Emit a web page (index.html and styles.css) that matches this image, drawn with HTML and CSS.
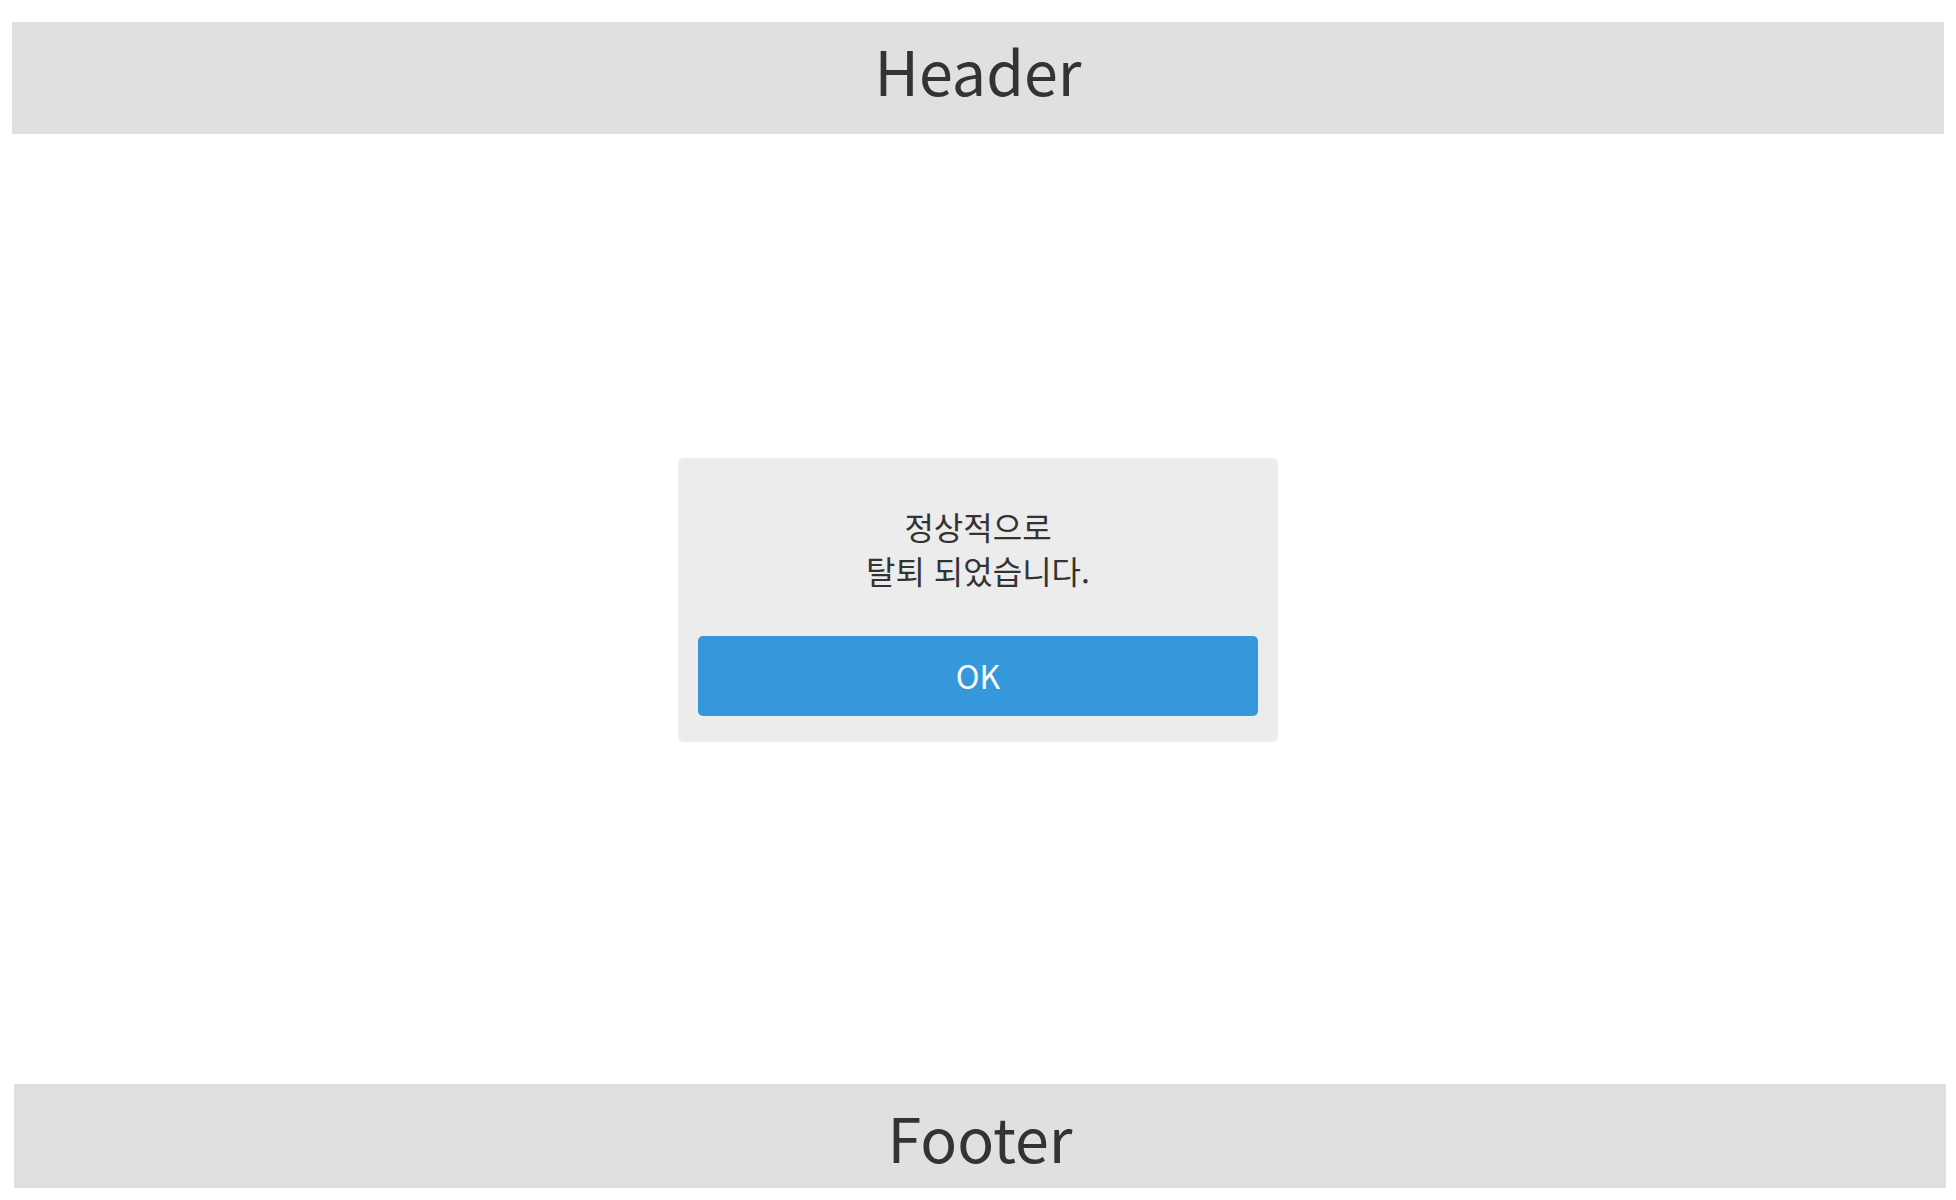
FILE: index.html
```html
<!DOCTYPE html>
<html lang="ko">
<head>
<meta charset="utf-8">
<title>탈퇴 완료</title>
<link rel="stylesheet" href="styles.css">
</head>
<body>
<div class="page">
  <header class="header">Header</header>
  <main class="main">
    <div class="dialog">
      <p class="message">정상적으로<br>탈퇴 되었습니다.</p>
      <button class="ok-btn" type="button">OK</button>
    </div>
  </main>
  <footer class="footer">Footer</footer>
</div>
</body>
</html>
```

FILE: styles.css
```css
html, body {
  margin: 0;
  padding: 0;
  background: #ffffff;
}
body {
  font-family: "Noto Sans CJK KR", "Noto Sans", sans-serif;
  color: #333333;
}
.page {
  height: 1200px;
  box-sizing: border-box;
  padding: 22px 0 12px;
  display: flex;
  flex-direction: column;
}
.header {
  margin: 0 12px;
  height: 112px;
  box-sizing: border-box;
  padding-bottom: 18px;
  background: #e0e0e0;
  display: flex;
  align-items: center;
  justify-content: center;
  font-size: 61px;
  color: #333333;
}
.main {
  flex: 1;
  display: flex;
  justify-content: center;
  align-items: flex-start;
  padding-top: 324px;
}
.dialog {
  width: 600px;
  height: 284px;
  box-sizing: border-box;
  background: #ececec;
  border-radius: 6px;
  padding: 46px 20px 26px;
  display: flex;
  flex-direction: column;
  align-items: stretch;
}
.message {
  margin: 0;
  text-align: center;
  font-size: 32px;
  line-height: 44px;
  color: #333333;
  flex: 1;
}
.ok-btn {
  height: 80px;
  border: none;
  border-radius: 5px;
  padding: 0 0 3px;
  background: #3498db;
  color: #ffffff;
  font-family: "Noto Sans CJK KR", "Noto Sans", sans-serif;
  font-size: 32px;
  cursor: pointer;
}
.footer {
  margin: 0 10px 0 14px;
  height: 104px;
  background: #e0e0e0;
  display: flex;
  align-items: center;
  justify-content: center;
  font-size: 61px;
  color: #333333;
}
```
